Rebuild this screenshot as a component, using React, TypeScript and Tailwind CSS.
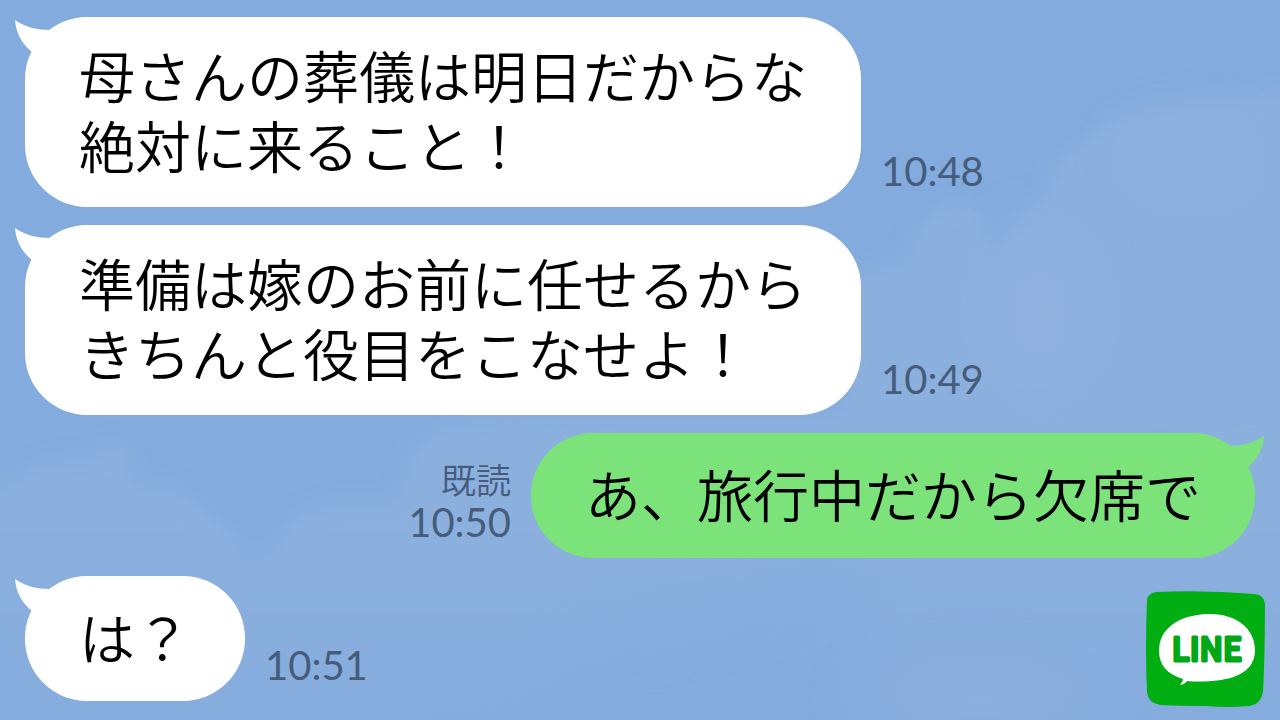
import clsx from "clsx";

type Message = {
  text: string;
  time: string;
  mine?: boolean;
};

const messages: Message[] = [
  { text: "母さんの葬儀は明日だからな\n絶対に来ること！", time: "10:48" },
  { text: "準備は嫁のお前に任せるから\nきちんと役目をこなせよ！", time: "10:49" },
  { text: "あ、旅行中だから欠席で", time: "10:50", mine: true },
  { text: "は？", time: "10:51" },
];

function Sky() {
  return (
    <svg
      aria-hidden="true"
      viewBox="0 0 1280 720"
      preserveAspectRatio="xMidYMid slice"
      className="absolute inset-0 h-full w-full"
    >
      <defs>
        <filter id="soft" x="-20%" y="-20%" width="140%" height="140%">
          <feGaussianBlur stdDeviation="9" />
        </filter>
        <filter id="softer" x="-50%" y="-50%" width="200%" height="200%">
          <feGaussianBlur stdDeviation="28" />
        </filter>
        <linearGradient id="fade" x1="0" y1="410" x2="0" y2="720" gradientUnits="userSpaceOnUse">
          <stop offset="0.4" stopColor="#8cb0de" />
          <stop offset="1" stopColor="#8cb0de" stopOpacity="0.2" />
        </linearGradient>
      </defs>
      <rect width="1280" height="720" fill="#83abdd" />
      <path
        d="M1320 90 L1200 100 Q1130 100 1100 130 Q1050 155 1044 200 Q1012 215 1000 250 Q985 250 982 215 Q960 192 935 212 Q910 235 905 262 L850 275 L840 450 L1320 460Z"
        fill="#8cb0de"
        filter="url(#soft)"
      />
      <path
        d="M-40 495 Q10 488 38 464 Q65 456 92 460 Q104 434 126 446 Q132 470 135 484 Q180 480 204 510 Q235 530 250 560 Q275 550 290 520 Q330 496 376 502 Q400 508 404 474 Q415 430 470 418 L1320 410 L1320 760 L-40 760Z"
        fill="url(#fade)"
        filter="url(#soft)"
      />
      <path
        d="M850 560 Q760 600 600 640 L480 740 L850 740Z"
        fill="#83abdd"
        opacity="0.7"
        filter="url(#softer)"
      />
      <g fill="#94b3e0" opacity="0.6" filter="url(#softer)">
        <ellipse cx="1190" cy="160" rx="60" ry="30" />
        <ellipse cx="1040" cy="310" rx="50" ry="80" />
        <ellipse cx="980" cy="700" rx="120" ry="30" />
      </g>
    </svg>
  );
}

function Tail({ mine }: { mine?: boolean }) {
  return (
    <svg
      aria-hidden="true"
      viewBox="0 0 48 48"
      className={clsx(
        "absolute top-[3px] h-12 w-12",
        mine ? "-right-[9px] -scale-x-100 text-[#7be37a]" : "-left-[10px] text-white"
      )}
    >
      <path
        d="M0 0 C10 7 22 10 35 10 L48 20 L28 46 L17 32 C8 25 1 14 0 0Z"
        fill="currentColor"
      />
    </svg>
  );
}

function Bubble({ message }: { message: Message }) {
  const { text, time, mine } = message;

  return (
    <li className={clsx("flex items-end gap-5", mine && "flex-row-reverse")}>
      <div
        className={clsx(
          "relative flex min-h-[125px] flex-col justify-center rounded-[62px] px-[54px] py-[25px]",
          mine ? "bg-[#7be37a]" : "bg-white"
        )}
      >
        <Tail mine={mine} />
        <p className="relative text-[56px] leading-[70px] font-[350] whitespace-pre-line text-black">
          {text}
        </p>
      </div>
      <div className="flex flex-col items-end pb-[14px] text-[#455c7b]">
        {mine && <span className="text-[35px] leading-10 font-[350]">既読</span>}
        <time className="text-[40px] leading-11">{time}</time>
      </div>
    </li>
  );
}

function LineLogo() {
  return (
    <svg
      role="img"
      aria-label="LINE"
      viewBox="0 0 120 116"
      className="absolute right-[14px] bottom-[13px] h-[116px] w-[120px]"
    >
      <path
        d="M10 1 Q60 -1 109 3 Q118 4 119 13 Q119 62 117 101 Q115 113 104 115 Q80 117 60 115 Q35 115 14 114 Q2 112 1 101 Q-1 60 1 9 Q2 2 10 1Z"
        fill="#00ae12"
      />
      <path
        d="M62 23 C89 22 109 37 109 59 C109 79 92 88 66 90 Q52 91 41 90 Q39 93 34 94 Q37 91 37 88 C21 83 13 74 13 60 C13 38 32 24 62 23Z"
        fill="#fff"
      />
      <text
        x="61"
        y="70"
        textAnchor="middle"
        fill="#00a816"
        stroke="#00a816"
        strokeWidth="3"
        strokeLinejoin="round"
        className="font-['Noto_Sans_CJK_JP',sans-serif] text-[32px] font-medium"
      >
        LINE
      </text>
    </svg>
  );
}

export default function App() {
  return (
    <main
      lang="ja"
      className="relative min-h-screen overflow-hidden bg-[#83abdd] font-['Lato','Noto_Sans_CJK_JP',sans-serif]"
    >
      <Sky />
      <ul className="relative flex flex-col gap-[18px] px-[25px] pt-[17px] pb-[19px]">
        {messages.map((message) => (
          <Bubble key={message.time} message={message} />
        ))}
      </ul>
      <LineLogo />
    </main>
  );
}
